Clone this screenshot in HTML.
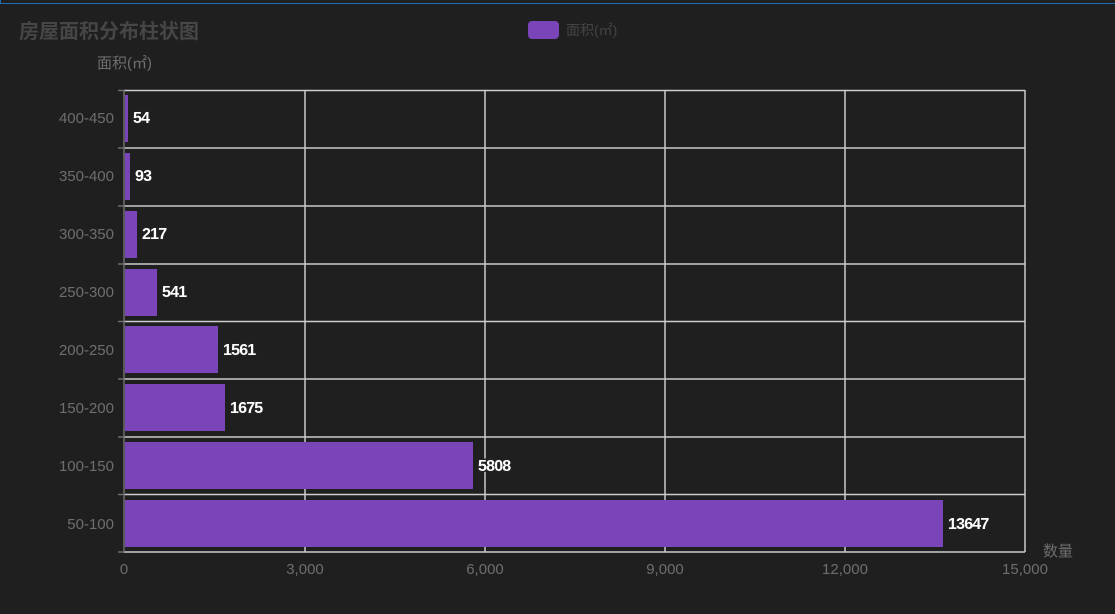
<!DOCTYPE html>
<html><head><meta charset="utf-8"><style>
html,body{margin:0;padding:0;background:#1f1f1f;width:1115px;height:614px;overflow:hidden}
svg{display:block}
text{font-family:"Liberation Sans","Noto Sans CJK SC",sans-serif}
.lbl{font-size:16px;font-weight:bold;fill:#fff;stroke:#222;stroke-width:3;paint-order:stroke;letter-spacing:-0.8px}
.ax{font-size:15px;fill:#6e6e6e}
</style></head><body>
<svg width="1115" height="614" xmlns="http://www.w3.org/2000/svg">
<rect x="0" y="0" width="1115" height="614" fill="#1f1f1f"/>
<rect x="0" y="3" width="1115" height="1" fill="#1e6fb5"/>
<rect x="0" y="0" width="1" height="4" fill="#1e6fb5"/>
<text x="19" y="38" font-size="20" font-weight="bold" fill="#464646">房屋面积分布柱状图</text>
<rect x="528" y="21" width="31" height="18" rx="4" fill="#7a45b8"/>
<text x="566" y="35" font-size="14" fill="#444">面积(㎡)</text>
<text x="97" y="68" class="ax">面积(㎡)</text>
<text x="1043" y="556" class="ax">数量</text>
<g stroke="#cccccc" stroke-width="1.5" fill="none">
<line x1="305" y1="90" x2="305" y2="552"/>
<line x1="485" y1="90" x2="485" y2="552"/>
<line x1="665" y1="90" x2="665" y2="552"/>
<line x1="845" y1="90" x2="845" y2="552"/>
<line x1="1025" y1="90" x2="1025" y2="552"/>
<line x1="124" y1="90.5" x2="1025" y2="90.5"/>
<line x1="124" y1="148" x2="1025" y2="148"/>
<line x1="124" y1="206" x2="1025" y2="206"/>
<line x1="124" y1="264" x2="1025" y2="264"/>
<line x1="124" y1="321.5" x2="1025" y2="321.5"/>
<line x1="124" y1="379" x2="1025" y2="379"/>
<line x1="124" y1="437" x2="1025" y2="437"/>
<line x1="124" y1="494.5" x2="1025" y2="494.5"/>
<line x1="124" y1="552" x2="1025" y2="552"/>
</g>
<g stroke="#6e6e6e" stroke-width="1.5">
<line x1="124" y1="90" x2="124" y2="552"/>
<line x1="118" y1="90.5" x2="124" y2="90.5"/>
<line x1="118" y1="148" x2="124" y2="148"/>
<line x1="118" y1="206" x2="124" y2="206"/>
<line x1="118" y1="264" x2="124" y2="264"/>
<line x1="118" y1="321.5" x2="124" y2="321.5"/>
<line x1="118" y1="379" x2="124" y2="379"/>
<line x1="118" y1="437" x2="124" y2="437"/>
<line x1="118" y1="494.5" x2="124" y2="494.5"/>
<line x1="118" y1="552" x2="124" y2="552"/>
</g>
<g fill="#7a45b8">
<rect x="125" y="95" width="3" height="47"/>
<rect x="125" y="153" width="5" height="47"/>
<rect x="125" y="211" width="12" height="47"/>
<rect x="125" y="269" width="32" height="47"/>
<rect x="125" y="326" width="93" height="47"/>
<rect x="125" y="384" width="100" height="47"/>
<rect x="125" y="442" width="348" height="47"/>
<rect x="125" y="500" width="818" height="47"/>
</g>
<g class="lbl">
<text x="133" y="123">54</text>
<text x="135" y="181">93</text>
<text x="142" y="239">217</text>
<text x="162" y="297">541</text>
<text x="223" y="355">1561</text>
<text x="230" y="413">1675</text>
<text x="478" y="471">5808</text>
<text x="948" y="529">13647</text>
</g>
<g class="ax" text-anchor="end">
<text x="114" y="123">400-450</text>
<text x="114" y="181">350-400</text>
<text x="114" y="239">300-350</text>
<text x="114" y="297">250-300</text>
<text x="114" y="355">200-250</text>
<text x="114" y="413">150-200</text>
<text x="114" y="471">100-150</text>
<text x="114" y="529">50-100</text>
</g>
<g class="ax" text-anchor="middle">
<text x="124" y="574">0</text>
<text x="305" y="574">3,000</text>
<text x="485" y="574">6,000</text>
<text x="665" y="574">9,000</text>
<text x="845" y="574">12,000</text>
<text x="1025" y="574">15,000</text>
</g>
</svg>
</body></html>
